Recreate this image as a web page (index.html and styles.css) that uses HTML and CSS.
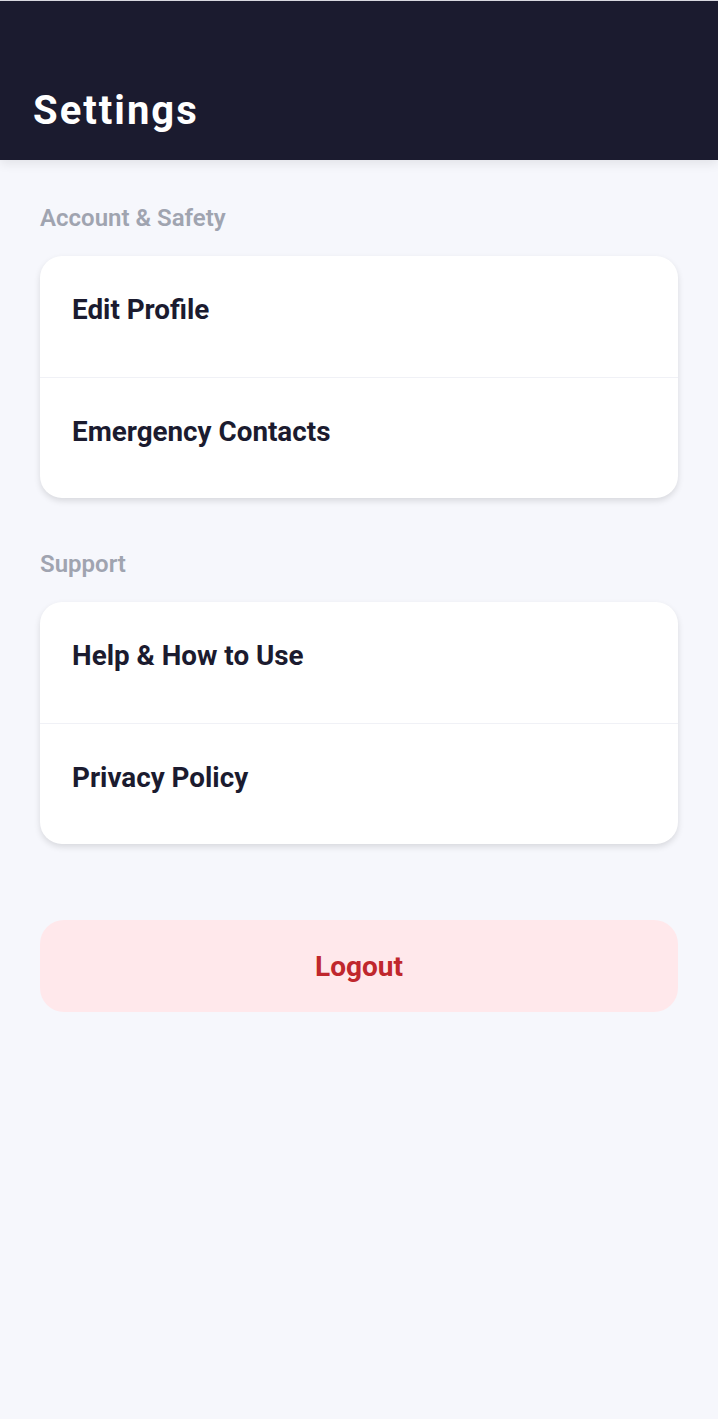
FILE: index.html
```html
<!DOCTYPE html>
<html lang="en">
<head>
  <meta charset="UTF-8">
  <title>Settings</title>
  <link rel="stylesheet" href="styles.css">
</head>
<body>

  <!-- Top bar -->
  <header class="topbar">
    <h1>Settings</h1>
  </header>

  <main class="content">
    <section class="group">
      <h2 class="group-title">Account &amp; Safety</h2>
      <div class="card">
        <div class="row">Edit Profile</div>
        <div class="row">Emergency Contacts</div>
      </div>
    </section>

    <section class="group">
      <h2 class="group-title">Support</h2>
      <div class="card">
        <div class="row">Help &amp; How to Use</div>
        <div class="row">Privacy Policy</div>
      </div>
    </section>

    <button class="logout">Logout</button>
  </main>

</body>
</html>
```

FILE: styles.css
```css
html, body {
  margin: 0;
  padding: 0;
  font-family: Roboto, 'Noto Sans', sans-serif;
  background: #f6f7fc;
  min-height: 100%;
}

.topbar {
  height: 160px;
  background: #1b1b2f;
  border-top: 1px solid #d8d8e0;
  box-sizing: border-box;
  display: flex;
  align-items: flex-end;
  padding: 0 33px 29px;
  box-shadow: 0 4px 10px rgba(0, 0, 0, 0.08);
}

.topbar h1 {
  margin: 0;
  color: #fff;
  font-size: 40px;
  font-weight: 700;
  letter-spacing: 2px;
  line-height: 1;
}

.content {
  padding: 42px 40px 0;
}

.group {
  margin-bottom: 50px;
}

.group-title {
  margin: 0 0 22px;
  font-size: 24px;
  font-weight: 600;
  color: #a0a4b0;
  line-height: 32px;
}

.card {
  background: #fff;
  border-radius: 22px;
  box-shadow: 0 3px 6px rgba(0, 0, 0, 0.12);
  overflow: hidden;
}

.row {
  height: 121px;
  box-sizing: border-box;
  padding: 0 32px 14px;
  display: flex;
  align-items: center;
  font-size: 27.8px;
  font-weight: 700;
  color: #1b1b2f;
}

.row + .row {
  border-top: 1px solid #f0f1f6;
}

.logout {
  display: block;
  width: 100%;
  height: 92px;
  margin-top: 76px;
  border: none;
  border-radius: 24px;
  background: #ffe8eb;
  color: #c0272d;
  font-family: Roboto, 'Noto Sans', sans-serif;
  font-size: 28px;
  font-weight: 700;
}
```
